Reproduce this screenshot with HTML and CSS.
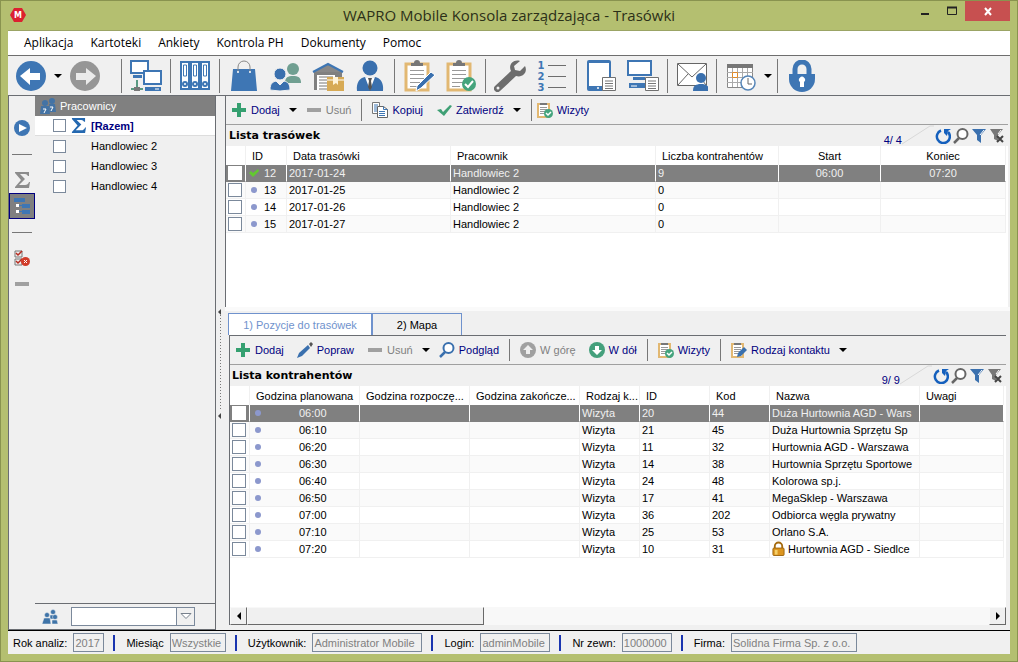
FILE: index.html
```html
<!DOCTYPE html>
<html lang="pl">
<head>
<meta charset="utf-8">
<title>WAPRO Mobile Konsola zarządzająca - Trasówki</title>
<link rel="stylesheet" href="styles.css">
</head>
<body>
<svg class="symbols" aria-hidden="true">
  <symbol id="caret" viewBox="0 0 8 4"><path d="M0 0h8L4 4z" fill="#000"/></symbol>
  <symbol id="back" viewBox="0 0 32 32"><circle cx="16" cy="16" r="15" fill="#3e76b4"/><path d="M5 16l10-8v5h10v7H15v5z" fill="#fff"/></symbol>
  <symbol id="forward" viewBox="0 0 32 32"><circle cx="16" cy="16" r="15" fill="#969696"/><path d="M27 16L17 8v5H7v7h10v5z" fill="#ebebeb"/></symbol>
  <symbol id="network" viewBox="0 0 32 32"><path d="M7 20v9M1 29h12" stroke="#5a9a82" stroke-width="2"/><path d="M4 27h6v4H4z" fill="#777"/><path d="M1 1h17v12H1z" fill="#fff" stroke="#3e76b4" stroke-width="2"/><path d="M3 15h9v3H3z" fill="#3e76b4"/><path d="M14 11h17v13H14z" fill="#fff" stroke="#3e76b4" stroke-width="2"/><path d="M15 27h16v4H15z" fill="#3e76b4"/><path d="M25 29h4" stroke="#fff"/></symbol>
  <symbol id="binders" viewBox="0 0 32 32"><g fill="#fff" stroke="#3e76b4" stroke-width="2"><path d="M2 2h8v27H2zM12 2h8v27h-8zM22 2h8v27h-8z"/><path d="M4.500 5h3v11h-3zM14.500 5h3v11h-3zM24.500 5h3v11h-3z" stroke-width="1"/><circle cx="6" cy="24" r="2"/><circle cx="16" cy="24" r="2"/><circle cx="26" cy="24" r="2"/></g></symbol>
  <symbol id="bag" viewBox="0 0 32 32"><path d="M5 9h22l2 22H3z" fill="#3e76b4"/><path d="M10 12V7a6 6 0 0 1 12 0v5" fill="none" stroke="#888"/><circle cx="10" cy="12" r="1" fill="#fff"/><circle cx="22" cy="12" r="1" fill="#fff"/></symbol>
  <symbol id="people" viewBox="0 0 32 32"><g fill="#709f91"><circle cx="23" cy="9" r="6"/><path d="M15 23c0-6 3-7 8-7s8 1 8 7z"/></g><g fill="#3a70ae" stroke="#f0f0f0"><circle cx="10" cy="14" r="6"/><path d="M0 30c0-7 3-8 6-9l4 4 4-4c4 1 6 3 6 9q-10 2-20 0z"/></g></symbol>
  <symbol id="warehouse" viewBox="0 0 32 32"><path d="M2 12h28v18H2z" fill="#808080"/><path d="M5 15h18v15H5z" fill="#fff"/><path d="M7 17h14M7 20h14M7 23h14M7 26h14M7 29h14" stroke="#777"/><path d="M1 12l15-8 15 8" fill="#888" stroke="#3e76b4" stroke-width="2"/><path d="M15 17h17v14H15z" fill="#d7aa55"/><path d="M15 20h17" stroke="#fff"/><path d="M21 17h5v8l-2-2-3 2z" fill="#fff3d8"/></symbol>
  <symbol id="person" viewBox="0 0 32 32"><circle cx="16" cy="8" r="7.500" fill="#3a70ae"/><path d="M3 31c-1-9 3-13 8-14l5 3 5-3c5 1 9 5 8 14z" fill="#3a70ae"/><path d="M11 17l5 13 5-13-5 2z" fill="#fff"/><path d="M14 18h4l-1 3 1 6-2 4-2-4 1-6z" fill="#555"/></symbol>
  <symbol id="clip" viewBox="0 0 32 32"><path d="M3 4h22v26H3z" fill="#fff" stroke="#e2b872" stroke-width="3"/><path d="M8 6V3h3a3 3 0 0 1 6 0h3v3z" fill="#777"/><path d="M7 10.500h14M7 14.500h14M7 18.500h14M7 22.500h11M7 26.500h8" stroke="#999"/></symbol>
  <symbol id="clip-pen" viewBox="0 0 32 32"><use href="#clip"/><path d="M28 12l4 3-14 13-5 3 1-5z" fill="#3a70ae" stroke="#fff"/></symbol>
  <symbol id="clip-check" viewBox="0 0 32 32"><use href="#clip"/><circle cx="24" cy="24" r="7" fill="#45a47d"/><path d="M20 24l3 3 5-6" fill="none" stroke="#fff" stroke-width="2"/></symbol>
  <symbol id="clip-pen-small" viewBox="0 0 16 16"><path d="M1 2h11v13H1z" fill="#fff" stroke="#e2b872" stroke-width="2"/><path d="M3 3V1h7v2z" fill="#777"/><path d="M3 5.500h7M3 7.500h7M3 9.500h6M3 11.500h4" stroke="#999"/><path d="M13 5l3 3-6 6-4 1 1-4z" fill="#3a70ae"/></symbol>
  <symbol id="clip-check-small" viewBox="0 0 16 16"><path d="M1 2h11v13H1z" fill="#fff" stroke="#e2b872" stroke-width="2"/><path d="M3 3V1h7v2z" fill="#777"/><path d="M3 5.500h7M3 7.500h7M3 9.500h6M3 11.500h4" stroke="#999"/><circle cx="11.500" cy="11.500" r="4.500" fill="#45a47d"/><path d="M9 11l2 2 3-3" fill="none" stroke="#fff" stroke-width="1.500"/></symbol>
  <symbol id="wrench" viewBox="0 0 32 32"><path d="M26 1C19-1 14 5 17 11L1 26a3.500 3.500 0 0 0 5 5L22 16c7 2 12-4 9-10l-5 5-5-1-1-4z" fill="#6d6d6d"/><circle cx="4" cy="28" r="1.500" fill="#f0f0f0"/></symbol>
  <symbol id="note" viewBox="0 0 14 14"><path d="M.5.5h13v13H.5z" fill="#fff" stroke="#707070"/><path d="M3 4h8M3 6.500h8M3 9h8M3 11.500h8" stroke="#777"/></symbol>
  <symbol id="tablet" viewBox="0 0 32 32"><rect x="2" y="0" width="24" height="31" rx="2" fill="#3e76b4"/><path d="M4 3h20v23H4z" fill="#fff"/><circle cx="13" cy="28" r="1" fill="#fff"/><use href="#note" x="17" y="17" width="14" height="14"/></symbol>
  <symbol id="monitor" viewBox="0 0 32 32"><path d="M1 1h23v14H1z" fill="#fff" stroke="#3e76b4" stroke-width="2"/><path d="M6 17h12v3H6zM2 23h18v5H2z" fill="#3e76b4"/><path d="M4 26h6" stroke="#fff"/><use href="#note" x="18" y="17" width="14" height="14"/></symbol>
  <symbol id="mail" viewBox="0 0 32 32"><path d="M1.500 3.500h29v22h-29z" fill="#fff" stroke="#666"/><path d="M2 4l14 13L30 4M2 25l10-11M30 25l-7-9" fill="none" stroke="#666"/><circle cx="25" cy="18" r="5" fill="#3a70ae"/><path d="M17 31c0-5 2-6 6-7h4c4 1 6 2 6 7z" fill="#3a70ae"/></symbol>
  <symbol id="calendar" viewBox="0 0 32 32"><path d="M2.500 4.500h25v23h-25z" fill="#fff" stroke="#888"/><path d="M2 4h26v4H2z" fill="#777"/><path d="M7.500 8v19M12.500 8v19M17.500 8v19M22.500 8v19M2 12.500h26M2 17.500h26M2 22.500h26" stroke="#aaa"/><path d="M7.500 12.500h5v5h-5z" fill="#fff" stroke="#e08a28"/><circle cx="23" cy="23" r="7" fill="#fff" stroke="#5585b8" stroke-width="1.500"/><path d="M23 18v6h4" fill="none" stroke="#666"/></symbol>
  <symbol id="lock" viewBox="0 0 32 32"><path d="M9 16V9a7 7 0 0 1 14 0v7" fill="none" stroke="#3e76b4" stroke-width="5"/><path d="M3 14h26v5a13 13 0 0 1-26 0z" fill="#3e76b4"/><path d="M14 27v-5a3 3 0 1 1 4 0v5z" fill="#fff"/></symbol>

  <symbol id="plus" viewBox="0 0 16 16"><path d="M6 1h4v5h5v4h-5v5H6v-5H1V6h5z" fill="#35a070"/></symbol>
  <symbol id="minus" viewBox="0 0 16 16"><path d="M1 6h14v4H1z" fill="#a0a0a0"/></symbol>
  <symbol id="copy" viewBox="0 0 16 16"><path d="M.5.500h7v11h-7z" fill="#fff" stroke="#777"/><path d="M2 3h4M2 5h3M2 7h3M2 9h3" stroke="#3e76b4"/><path d="M5.500 4.500h6l4 3v8h-10z" fill="#fff" stroke="#666"/><path d="M11.500 4.500v3h4M7 9.500h6M7 11.500h6M7 13.500h6" fill="none" stroke="#3e76b4"/></symbol>
  <symbol id="tick" viewBox="0 0 16 16"><path d="M1 8l4-1 2 3 7-7 2 1-8 10z" fill="#3fa075"/></symbol>
  <symbol id="pencil" viewBox="0 0 16 16"><path d="M0 16l2-5 9-8 2 3-8 8z" fill="#3a70ae"/><path d="M12 2l2-2 2 2-2 3z" fill="#555"/></symbol>
  <symbol id="magnify" viewBox="0 0 16 16"><circle cx="9.500" cy="6" r="5" fill="#fff" stroke="currentColor" stroke-width="2"/><path d="M6 10l-5 5" stroke="currentColor" stroke-width="2.500"/></symbol>
  <symbol id="up" viewBox="0 0 16 16"><circle cx="8" cy="8" r="8" fill="#a0a0a0"/><path d="M8 3l5 5h-3v4H6V8H3z" fill="#eee"/></symbol>
  <symbol id="down" viewBox="0 0 16 16"><circle cx="8" cy="8" r="8" fill="#45a07c"/><path d="M8 13L3 8h3V4h4v4h3z" fill="#fff"/></symbol>
  <symbol id="refresh" viewBox="0 0 16 16"><path d="M6 2.500A6.500 6.500 0 1 0 13 4" fill="none" stroke="#1560bd" stroke-width="2.500"/><path d="M9 1h7l-3 2-1 5-3-3z" fill="#1560bd"/></symbol>
  <symbol id="funnel" viewBox="0 0 16 16"><path d="M1 1h14l-5 6v8l-4-3V7z" fill="#3a70ae"/><path d="M9 7l4-5" stroke="#fff"/></symbol>
  <symbol id="funnel-off" viewBox="0 0 16 16"><path d="M1 1h13L9 7v6l-4-2V7z" fill="#777"/><path d="M9 6l3-4" stroke="#fff"/><path d="M8 8l6 6M14 8l-6 6" stroke="#444" stroke-width="2"/></symbol>
  <symbol id="sigma" viewBox="0 0 16 16"><path d="M1 0h14v4h-1q-1-2-3-2H6l5 5-6 6h6q3 0 4-3h1l-1 6H1v-1l6-7-6-7z" fill="currentColor"/></symbol>
  <symbol id="play" viewBox="0 0 16 16"><circle cx="8" cy="8" r="8" fill="#3e76b4"/><path d="M5 4l8 4-8 4z" fill="#fff"/></symbol>
  <symbol id="tree" viewBox="0 0 16 16"><path d="M0 0h11v4H0zM8 6h8v4H8zM8 12h8v4H8z" fill="#3e76b4"/><path d="M2 6h3v3H2zM2 12h3v3H2z" fill="#fff"/><path d="M5 7.500h3M5 13.500h3" stroke="#3e76b4"/></symbol>
  <symbol id="checklist" viewBox="0 0 16 16"><path d="M1 1h7v6H1zM1 9h7v6H1z" fill="#eee" stroke="#777"/><path d="M2 3l2 2 4-4M2 11l2 2 4-4" fill="none" stroke="#b62b20" stroke-width="1.500"/><circle cx="11.500" cy="11.500" r="4.500" fill="#d23c2a"/><path d="M10 10l3 3M13 10l-3 3" stroke="#fff"/></symbol>
  <symbol id="group" viewBox="0 0 16 16"><g fill="#3f74a8" stroke="#f0f0f0" stroke-width=".5"><circle cx="11" cy="3" r="2.500"/><path d="M8 6h6l1 4H8z"/><circle cx="5" cy="6" r="2.500"/><path d="M2 9h6l1 6H0z"/><circle cx="13" cy="8" r="2.500"/><path d="M10 11h5l1 4h-6z"/></g></symbol>
  <symbol id="group-query" viewBox="0 0 16 16"><g fill="#4373a5"><circle cx="5" cy="5" r="3"/><circle cx="12" cy="3" r="3"/><path d="M1 8h8l1 8H0zM9 6h6l1 8h-6z"/></g><path d="M3 11h3l-2 4M10 9h3l-2 4" fill="none" stroke="#fff"/></symbol>
  <symbol id="padlock" viewBox="0 0 14 16"><path d="M3 8V5a4 4 0 0 1 8 0v3" fill="none" stroke="#a56b10" stroke-width="2"/><rect x="1" y="7" width="12" height="8" rx="1" fill="#dc951f" stroke="#9c640e"/><path d="M3 9h3v5H3z" fill="#f5cf68"/></symbol>
  <symbol id="ok" viewBox="0 0 10 10"><path d="M0 5l2-2 2 2 5-4 1 2-6 6z" fill="#62c92f"/></symbol>
  <symbol id="dot" viewBox="0 0 10 10"><circle cx="5" cy="5" r="3" fill="#8c98cd"/></symbol>
  <symbol id="slope" viewBox="0 0 32 20"><path d="M0 19L28 1h4" fill="none" stroke="#d8d8d8"/></symbol>
</svg>

<div class="window">
  <header class="titlebar">
    <svg class="app-icon" viewBox="0 0 16 14"><path d="M4 0h8l4 7-4 7H4L0 7z" fill="#dc2130"/><text x="8" y="10">M</text></svg>
    <h1 class="title">WAPRO Mobile Konsola zarządzająca - Trasówki</h1>
    <div class="win-controls">
      <button class="win-btn" aria-label="Minimalizuj"><svg viewBox="0 0 12 12"><path d="M2 8h8v2H2z" fill="#222"/></svg></button>
      <button class="win-btn" aria-label="Maksymalizuj"><svg viewBox="0 0 12 12"><path d="M1.500 2.500h9v7h-9z" fill="none" stroke="#222"/><path d="M1 2.500h10" stroke="#222" stroke-width="2"/></svg></button>
      <button class="win-btn win-close" aria-label="Zamknij"><svg viewBox="0 0 12 12"><path d="M3 3l6 7M9 3l-6 7" stroke="#fff" stroke-width="2"/></svg></button>
    </div>
  </header>

  <div class="client">
    <nav class="menu">
      <button>Aplikacja</button><button>Kartoteki</button><button>Ankiety</button><button>Kontrola PH</button><button>Dokumenty</button><button>Pomoc</button>
    </nav>

    <div class="main-tools">
      <button class="tool" aria-label="Wstecz"><svg><use href="#back"/></svg></button>
      <button class="drop" aria-label="Historia"><svg class="caret"><use href="#caret"/></svg></button>
      <button class="tool tool-last" aria-label="Dalej"><svg><use href="#forward"/></svg></button>
      <span class="rule"></span>
      <button class="tool" aria-label="Połączenie"><svg><use href="#network"/></svg></button>
      <span class="rule"></span>
      <button class="tool" aria-label="Kartoteki"><svg><use href="#binders"/></svg></button>
      <span class="rule"></span>
      <button class="tool" aria-label="Artykuły"><svg><use href="#bag"/></svg></button>
      <button class="tool" aria-label="Kontrahenci"><svg><use href="#people"/></svg></button>
      <button class="tool" aria-label="Magazyny"><svg><use href="#warehouse"/></svg></button>
      <button class="tool" aria-label="Pracownicy"><svg><use href="#person"/></svg></button>
      <span class="rule"></span>
      <button class="tool" aria-label="Ankiety"><svg><use href="#clip-pen"/></svg></button>
      <button class="tool" aria-label="Wizyty"><svg><use href="#clip-check"/></svg></button>
      <span class="rule"></span>
      <button class="tool" aria-label="Konfiguracja"><svg><use href="#wrench"/></svg></button>
      <button class="tool" aria-label="Numeracja"><svg viewBox="0 0 32 32"><g class="digits"><text x="5" y="9">1</text><text x="5" y="20">2</text><text x="5" y="31">3</text></g><path d="M12 5.500h18M12 16.500h18M12 27.500h18" stroke="#6d6d6d"/></svg></button>
      <span class="rule"></span>
      <button class="tool" aria-label="Dokumenty mobilne"><svg><use href="#tablet"/></svg></button>
      <button class="tool" aria-label="Dokumenty"><svg><use href="#monitor"/></svg></button>
      <span class="rule"></span>
      <button class="tool" aria-label="Wiadomości"><svg><use href="#mail"/></svg></button>
      <span class="rule"></span>
      <button class="tool" aria-label="Terminarz"><svg><use href="#calendar"/></svg></button>
      <button class="drop" aria-label="Terminarz – opcje"><svg class="caret"><use href="#caret"/></svg></button>
      <span class="rule"></span>
      <button class="tool" aria-label="Blokada"><svg><use href="#lock"/></svg></button>
    </div>

    <div class="workspace">
      <aside class="side">
        <div class="rail">
          <button aria-label="Uruchom"><svg><use href="#play"/></svg></button>
          <hr>
          <button class="gray" aria-label="Suma"><svg><use href="#sigma"/></svg></button>
          <button class="active" aria-label="Drzewo"><svg><use href="#tree"/></svg></button>
          <hr>
          <button aria-label="Odznacz"><svg><use href="#checklist"/></svg></button>
          <button aria-label="Zwiń"><svg><use href="#minus"/></svg></button>
        </div>
        <div class="staff">
          <h2 class="staff-head"><svg><use href="#group-query"/></svg>Pracownicy</h2>
          <label class="staff-row total"><input type="checkbox"><svg><use href="#sigma"/></svg>[Razem]</label>
          <label class="staff-row"><input type="checkbox"><span></span>Handlowiec 2</label>
          <label class="staff-row"><input type="checkbox"><span></span>Handlowiec 3</label>
          <label class="staff-row"><input type="checkbox"><span></span>Handlowiec 4</label>
          <div class="staff-filter">
            <svg><use href="#group"/></svg>
            <div class="combo"><input type="text" aria-label="Filtr pracowników"><button aria-label="Rozwiń"><svg viewBox="0 0 12 7"><path d="M1 .5h10l-5 5z" fill="#fff" stroke="#77808c"/></svg></button></div>
          </div>
        </div>
      </aside>

      <div class="splitter"><span></span></div>

      <main class="panels">
        <section class="panel">
          <div class="tools">
            <button class="act"><svg><use href="#plus"/></svg>Dodaj</button>
            <button class="mini" aria-label="Dodaj – opcje"><svg class="caret"><use href="#caret"/></svg></button>
            <button class="act off"><svg><use href="#minus"/></svg>Usuń</button>
            <span class="rule"></span>
            <button class="act wide"><svg><use href="#copy"/></svg>Kopiuj</button>
            <button class="act"><svg><use href="#tick"/></svg>Zatwierdź</button>
            <button class="mini" aria-label="Zatwierdź – opcje"><svg class="caret"><use href="#caret"/></svg></button>
            <span class="rule near"></span>
            <button class="act"><svg><use href="#clip-check-small"/></svg>Wizyty</button>
          </div>
          <div class="caption">
            <h2>Lista trasówek</h2>
            <span class="count">4/ 4</span><svg class="slope"><use href="#slope"/></svg>
            <button aria-label="Odśwież"><svg><use href="#refresh"/></svg></button>
            <button aria-label="Szukaj"><svg><use href="#magnify"/></svg></button>
            <button aria-label="Filtruj"><svg><use href="#funnel"/></svg></button>
            <button aria-label="Usuń filtr"><svg><use href="#funnel-off"/></svg></button>
          </div>
          <div class="sheet">
            <table class="grid routes">
              <colgroup><col class="c-check"><col class="c-id"><col class="c-date"><col class="c-staff"><col class="c-num"><col class="c-start"><col></colgroup>
              <thead><tr><th></th><th>ID</th><th>Data trasówki</th><th>Pracownik</th><th>Liczba kontrahentów</th><th class="mid">Start</th><th class="mid">Koniec</th></tr></thead>
              <tbody>
                <tr class="selected"><td><input type="checkbox" aria-label="12"></td><td><svg class="mark"><use href="#ok"/></svg>12</td><td>2017-01-24</td><td>Handlowiec 2</td><td>9</td><td class="mid">06:00</td><td class="mid">07:20</td></tr>
                <tr><td><input type="checkbox" aria-label="13"></td><td><svg class="mark"><use href="#dot"/></svg>13</td><td>2017-01-25</td><td>Handlowiec 2</td><td>0</td><td></td><td></td></tr>
                <tr><td><input type="checkbox" aria-label="14"></td><td><svg class="mark"><use href="#dot"/></svg>14</td><td>2017-01-26</td><td>Handlowiec 2</td><td>0</td><td></td><td></td></tr>
                <tr><td><input type="checkbox" aria-label="15"></td><td><svg class="mark"><use href="#dot"/></svg>15</td><td>2017-01-27</td><td>Handlowiec 2</td><td>0</td><td></td><td></td></tr>
              </tbody>
            </table>
          </div>
        </section>

        <div class="lower">
          <div class="tabs" role="tablist">
            <button class="tab tab-on" role="tab" aria-selected="true">1) Pozycje do trasówek</button>
            <button class="tab" role="tab" aria-selected="false">2) Mapa</button>
          </div>
          <section class="panel panel-lower">
            <div class="tools">
              <button class="act wide"><svg><use href="#plus"/></svg>Dodaj</button>
              <button class="act wide"><svg><use href="#pencil"/></svg>Popraw</button>
              <button class="act off"><svg><use href="#minus"/></svg>Usuń</button>
              <button class="mini" aria-label="Usuń – opcje"><svg class="caret"><use href="#caret"/></svg></button>
              <button class="act"><svg class="blue"><use href="#magnify"/></svg>Podgląd</button>
              <span class="rule"></span>
              <button class="act off wide"><svg><use href="#up"/></svg>W górę</button>
              <button class="act"><svg><use href="#down"/></svg>W dół</button>
              <span class="rule"></span>
              <button class="act"><svg><use href="#clip-check-small"/></svg>Wizyty</button>
              <span class="rule"></span>
              <button class="act"><svg><use href="#clip-pen-small"/></svg>Rodzaj kontaktu</button>
              <button class="mini" aria-label="Rodzaj kontaktu – opcje"><svg class="caret"><use href="#caret"/></svg></button>
            </div>
            <div class="caption">
              <h2>Lista kontrahentów</h2>
              <span class="count">9/ 9</span><svg class="slope"><use href="#slope"/></svg>
              <button aria-label="Odśwież"><svg><use href="#refresh"/></svg></button>
              <button aria-label="Szukaj"><svg><use href="#magnify"/></svg></button>
              <button aria-label="Filtruj"><svg><use href="#funnel"/></svg></button>
              <button aria-label="Usuń filtr"><svg><use href="#funnel-off"/></svg></button>
            </div>
            <div class="sheet">
              <table class="grid visits">
                <colgroup><col class="c-check"><col class="c-time"><col class="c-time"><col class="c-time"><col class="c-kind"><col class="c-vid"><col class="c-code"><col class="c-name"><col></colgroup>
                <thead><tr><th></th><th>Godzina planowana</th><th>Godzina rozpoczę...</th><th>Godzina zakończe...</th><th>Rodzaj k...</th><th>ID</th><th>Kod</th><th>Nazwa</th><th>Uwagi</th></tr></thead>
                <tbody>
                  <tr class="selected"><td><input type="checkbox" aria-label="06:00"></td><td><svg class="mark"><use href="#dot"/></svg><span class="time">06:00</span></td><td></td><td></td><td>Wizyta</td><td>20</td><td>44</td><td>Duża Hurtownia AGD - Wars</td><td></td></tr>
                  <tr><td><input type="checkbox" aria-label="06:10"></td><td><svg class="mark"><use href="#dot"/></svg><span class="time">06:10</span></td><td></td><td></td><td>Wizyta</td><td>21</td><td>45</td><td>Duża Hurtownia Sprzętu Sp</td><td></td></tr>
                  <tr><td><input type="checkbox" aria-label="06:20"></td><td><svg class="mark"><use href="#dot"/></svg><span class="time">06:20</span></td><td></td><td></td><td>Wizyta</td><td>11</td><td>32</td><td>Hurtownia AGD - Warszawa</td><td></td></tr>
                  <tr><td><input type="checkbox" aria-label="06:30"></td><td><svg class="mark"><use href="#dot"/></svg><span class="time">06:30</span></td><td></td><td></td><td>Wizyta</td><td>14</td><td>38</td><td>Hurtownia Sprzętu Sportowe</td><td></td></tr>
                  <tr><td><input type="checkbox" aria-label="06:40"></td><td><svg class="mark"><use href="#dot"/></svg><span class="time">06:40</span></td><td></td><td></td><td>Wizyta</td><td>24</td><td>48</td><td>Kolorowa sp.j.</td><td></td></tr>
                  <tr><td><input type="checkbox" aria-label="06:50"></td><td><svg class="mark"><use href="#dot"/></svg><span class="time">06:50</span></td><td></td><td></td><td>Wizyta</td><td>17</td><td>41</td><td>MegaSklep - Warszawa</td><td></td></tr>
                  <tr><td><input type="checkbox" aria-label="07:00"></td><td><svg class="mark"><use href="#dot"/></svg><span class="time">07:00</span></td><td></td><td></td><td>Wizyta</td><td>36</td><td>202</td><td>Odbiorca węgla prywatny</td><td></td></tr>
                  <tr><td><input type="checkbox" aria-label="07:10"></td><td><svg class="mark"><use href="#dot"/></svg><span class="time">07:10</span></td><td></td><td></td><td>Wizyta</td><td>25</td><td>53</td><td>Orlano S.A.</td><td></td></tr>
                  <tr><td><input type="checkbox" aria-label="07:20"></td><td><svg class="mark"><use href="#dot"/></svg><span class="time">07:20</span></td><td></td><td></td><td>Wizyta</td><td>10</td><td>31</td><td><svg class="padlock"><use href="#padlock"/></svg>Hurtownia AGD - Siedlce</td><td></td></tr>
                </tbody>
              </table>
              <div class="hscroll">
                <button aria-label="Przewiń w lewo"><svg viewBox="0 0 8 8"><path d="M6 0v8L2 4z"/></svg></button>
                <div class="track"><div class="thumb"></div></div>
                <button aria-label="Przewiń w prawo"><svg viewBox="0 0 8 8"><path d="M2 0v8l4-4z"/></svg></button>
              </div>
            </div>
          </section>
        </div>
      </main>
    </div>

    <footer class="status">
      <label for="year">Rok analiz:</label><input id="year" class="w-year" value="2017" readonly><span></span>
      <label for="month">Miesiąc</label><input id="month" class="w-month" value="Wszystkie" readonly><span></span>
      <label for="user">Użytkownik:</label><input id="user" class="w-user" value="Administrator Mobile" readonly><span></span>
      <label for="login">Login:</label><input id="login" class="w-login" value="adminMobile" readonly><span></span>
      <label for="ext">Nr zewn:</label><input id="ext" class="w-ext" value="1000000" readonly><span></span>
      <label for="firm">Firma:</label><input id="firm" class="w-firm" value="Solidna Firma Sp. z o.o." readonly>
    </footer>
  </div>
</div>
</body>
</html>
```
FILE: styles.css
```css
* { box-sizing: border-box; }

body {
  margin: 0;
  font: 11px/16px "Liberation Sans", Arial, sans-serif;
  color: #000;
}

button {
  display: flex;
  align-items: center;
  justify-content: center;
  margin: 0;
  padding: 0;
  border: 0;
  background: none;
  color: inherit;
  font: inherit;
  white-space: nowrap;
}

input { font: inherit; }
svg { display: block; flex: none; width: 16px; height: 16px; }
h1, h2 { margin: 0; }
.symbols { position: absolute; width: 0; height: 0; }
.caret { width: 8px; height: 4px; }
.digits { font: bold 10px "DejaVu Sans", sans-serif; fill: #3e76b4; text-anchor: middle; }

/* Window frame */
.window {
  display: flex;
  flex-direction: column;
  min-height: 100vh;
  padding: 0 7px 7px;
  border: 1px solid #89934f;
  background: #b4bf70;
}

.titlebar {
  display: grid;
  grid-template-columns: 1fr auto 1fr;
  height: 29px;
}

.app-icon { width: 16px; height: 14px; margin: 7px 2px; }
.app-icon text { font: bold 8px "DejaVu Sans", sans-serif; fill: #fff; text-anchor: middle; }

.title {
  font: 15px/29px "Open Sans", sans-serif;
  color: #2c3018;
}

.win-controls { display: flex; justify-content: flex-end; }
.win-btn { width: 27px; height: 20px; }
.win-btn svg { width: 12px; height: 12px; }
.win-close { width: 45px; background: #c75050; }

.client {
  display: flex;
  flex: 1;
  flex-direction: column;
  border: 1px solid #9ba465;
  border-width: 1px 0 0;
  background: #f0f0f0;
}

/* Menu */
.menu {
  display: flex;
  gap: 17px;
  height: 25px;
  padding-left: 16px;
  border-bottom: 1px solid #6e6e6e;
  background: #fff;
  font: 12px/24px "Open Sans", sans-serif;
}

/* Main toolbar */
.main-tools {
  display: flex;
  align-items: center;
  height: 40px;
  padding-left: 2px;
  border-bottom: 1px solid #6a6d72;
}

.tool { width: 42px; height: 36px; }
.tool svg { width: 32px; height: 32px; }
.tool-last { margin-right: 12px; }
.drop { width: 12px; height: 36px; }
.rule { flex: none; width: 1px; background: #777; }
.main-tools .rule { height: 34px; margin: 0 3px; }

/* Work area */
.workspace { display: flex; flex: 1; }

.side {
  display: flex;
  flex: none;
  width: 208px;
  border: 1px solid #6a6d72;
  border-top: 0;
}

.rail {
  display: flex;
  flex-direction: column;
  align-items: center;
  width: 26px;
  padding-top: 19px;
}

.rail button { width: 26px; height: 26px; }
.rail hr { width: 20px; height: 1px; margin: 13px 0 12px; border: 0; background: #777; }
.rail .gray { color: #8c8c8c; }
.rail .active { border: 1px solid #000080; background: #808080; }

.staff { display: flex; flex: 1; flex-direction: column; }

.staff-head {
  display: flex;
  gap: 4px;
  align-items: center;
  height: 20px;
  padding-left: 5px;
  background: #808080;
  color: #fff;
  font: 11px/20px "Liberation Sans", Arial, sans-serif;
}

.staff-row {
  display: flex;
  gap: 5px;
  align-items: center;
  height: 20px;
  padding-left: 18px;
}

.staff-row input, .grid input {
  flex: none;
  appearance: none;
  width: 13px;
  height: 13px;
  margin: 0;
  border: 1px solid #7b899b;
  background: #fff;
}

.staff-row svg, .staff-row span { width: 15px; height: 15px; }
.staff-row svg { color: #2468b0; }
.total { border-bottom: 1px solid #ddd; background: #fff; color: #000080; font-weight: bold; }

.staff-filter {
  display: flex;
  gap: 13px;
  align-items: center;
  height: 26px;
  margin-top: auto;
  padding-left: 7px;
  border-top: 1px solid #6a6d72;
}

.combo { display: flex; width: 124px; height: 19px; border: 1px solid #7b899b; }
.combo input { flex: 1; min-width: 0; padding: 0 2px; border: 0; background: #fff; }
.combo button { width: 18px; border-left: 1px solid #7b899b; }
.combo svg { width: 12px; height: 7px; }

.splitter {
  display: flex;
  flex: none;
  justify-content: center;
  align-items: center;
  width: 9px;
}

.splitter span {
  position: relative;
  width: 9px;
  height: 116px;
  background: repeating-linear-gradient(#777 0 1px, transparent 1px 3px) 4px 10px / 1px 96px no-repeat;
}

.splitter span::before, .splitter span::after {
  content: "";
  position: absolute;
  left: 2px;
  border: 3px solid transparent;
  border-width: 3px 3px 3px 0;
  border-right-color: #444;
}

.splitter span::before { top: 4px; }
.splitter span::after { bottom: 2px; }

.panels {
  display: grid;
  flex: 1;
  grid-template-rows: 211fr 323fr;
  min-width: 0;
}

.panel {
  display: flex;
  flex-direction: column;
  min-width: 0;
  margin-right: 2px;
  border: 1px solid #6a6d72;
  border-width: 0 0 0 1px;
}

.tools {
  display: flex;
  gap: 9px;
  align-items: center;
  height: 29px;
  padding-left: 5px;
  border-bottom: 1px solid #a0a0a0;
}

.act { gap: 4px; height: 24px; color: #000080; }
.off { color: #808080; }
.wide { margin-right: 4px; }
.mini { height: 24px; }
.tools .rule { height: 22px; margin: 0 1px; }
.tools .near { margin-right: -4px; }
.blue { color: #3a70ae; }

.caption {
  display: flex;
  align-items: center;
  height: 21px;
  padding: 0 2px 0 3px;
}

.caption h2 { margin-right: auto; font: bold 11px/20px "DejaVu Sans", Verdana, sans-serif; }
.caption button { width: 18px; color: #666; }
.count { align-self: flex-end; line-height: 12px; color: #000080; }
.slope { align-self: flex-start; width: 32px; height: 20px; }

.sheet {
  display: flex;
  flex: 1;
  flex-direction: column;
  background: #fff;
}

.grid {
  width: calc(100% - 2px);
  border-collapse: separate;
  border-spacing: 0;
  table-layout: fixed;
}

.grid th, .grid td {
  height: 17px;
  padding: 0 0 0 2px;
  overflow: hidden;
  border: solid #f0f0f0;
  border-width: 0 1px 1px 0;
  line-height: 16px;
  text-align: left;
  white-space: nowrap;
}

.grid th { height: 19px; padding: 0 0 0 6px; border-bottom: 0; font-weight: normal; }
.grid .mid { padding: 0; text-align: center; }
.grid tbody tr:nth-child(even) { background: #fafafa; }
.grid .selected td { border-color: #fff; border-bottom-color: #808080; background: #808080; color: #f0f0f0; }
.grid input { display: block; width: 14px; height: 14px; }
.grid .selected input { border-color: #fff; }
.mark { display: inline-block; width: 10px; height: 10px; margin: 0 5px 0 1px; vertical-align: -1px; }
.time { margin-left: 31px; }
.padlock { display: inline-block; width: 13px; height: 16px; margin-right: 3px; vertical-align: top; }

.c-check { width: 20px; }
.c-id { width: 41px; }
.c-date { width: 164px; }
.c-staff { width: 205px; }
.c-num { width: 123px; }
.c-start { width: 102px; }
.c-time { width: 110px; }
.c-kind { width: 60px; }
.c-vid { width: 70px; }
.c-code { width: 60px; }
.c-name { width: 150px; }

/* Lower part */
.lower {
  display: flex;
  flex-direction: column;
  min-width: 0;
  padding: 2px 2px 5px 3px;
  border-top: 4px solid #fafafa;
}

.tabs { display: flex; }

.tab {
  width: 90px;
  height: 22px;
  border: 1px solid #6f92cd;
  border-bottom: 0;
}

.tab-on { width: 144px; background: #fff; color: #6f92cd; }
.panel-lower { flex: 1; margin-left: 1px; border-top-width: 1px; }
.panel-lower .caption { padding-left: 2px; }

.hscroll { display: flex; height: 18px; margin-top: auto; background: #f8f8f8; }

.hscroll button, .thumb {
  border: 1px solid #f8f8f8;
  border-right-color: #696969;
  border-bottom-color: #696969;
  background: #f0f0f0;
}

.hscroll button { width: 17px; }
.hscroll svg { width: 8px; height: 8px; }
.track { flex: 1; }
.thumb { width: 32%; height: 18px; }

/* Status bar */
.status {
  display: flex;
  gap: 6px;
  align-items: center;
  height: 24px;
  padding-left: 5px;
  border-top: 1px solid #000;
}

.status input {
  height: 19px;
  padding: 0 1px;
  border: 1px solid #7b899b;
  background: #f0f0f0;
  color: #808080;
}

.status span { width: 2px; height: 16px; margin: 0 5px 0 3px; background: #1a35b0; }
.w-year { width: 31px; }
.w-month { width: 56px; }
.w-user { width: 110px; }
.w-login { width: 70px; }
.w-ext { width: 50px; }
.w-firm { width: 126px; }
```
